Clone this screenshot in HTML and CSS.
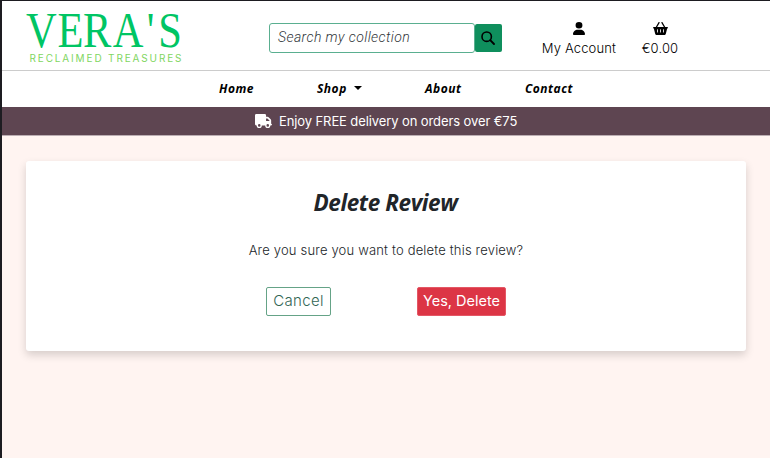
FILE: index.html
```html
<!DOCTYPE html>
<html lang="en">
<head>
<meta charset="utf-8">
<title>Delete Review</title>
<link rel="stylesheet" href="styles.css">
</head>
<body>
<header class="header">
  <a class="logo">
    <svg width="160" height="54" viewBox="0 0 160 54">
      <text class="logo-name" transform="scale(.85 1)" x="0 37 67 102 142 155.500" y="34">VERA'S</text>
      <text class="logo-tag" x="3.500" y="48.500" textLength="152" lengthAdjust="spacing">RECLAIMED TREASURES</text>
    </svg>
  </a>
  <form class="search">
    <div class="search-input"><span>Search my collection</span></div>
    <div class="search-button">
      <svg width="14" height="14" viewBox="0 0 14 14" fill="none" stroke="#000" stroke-width="1.600"><circle cx="5.700" cy="5.700" r="4.700"/><path d="M9.200 9.200L13 13" stroke-width="1.900" stroke-linecap="round"/></svg>
    </div>
  </form>
  <a class="tool account">
    <svg width="12" height="13" viewBox="0 0 448 512" preserveAspectRatio="none"><path d="M224 256a128 128 0 1 0 0-256 128 128 0 1 0 0 256zm-46 48C80 304 0 384 0 482c0 17 13 30 30 30h388c17 0 30-13 30-30 0-98-80-178-178-178z"/></svg>
    <span>My Account</span>
  </a>
  <a class="tool basket">
    <svg width="15" height="13" viewBox="0 0 576 512" preserveAspectRatio="none"><path fill-rule="evenodd" d="M253 35c6-12 2-26-10-32s-26-2-32 10L106 192H32c-18 0-32 14-32 32s14 32 32 32l51 207c7 29 33 49 62 49h286c29 0 55-20 62-49l51-207c18 0 32-14 32-32s-14-32-32-32h-74L365 13c-6-12-20-16-32-10s-16 20-10 32l93 157H160zM192 304v96c0 9-7 16-16 16s-16-7-16-16v-96c0-9 7-16 16-16s16 7 16 16zm112 0v96c0 9-7 16-16 16s-16-7-16-16v-96c0-9 7-16 16-16s16 7 16 16zm112 0v96c0 9-7 16-16 16s-16-7-16-16v-96c0-9 7-16 16-16s16 7 16 16z"/></svg>
    <span>€0.00</span>
  </a>
</header>
<nav class="nav">
  <a class="home">Home</a>
  <a class="shop">Shop<i class="caret"></i></a>
  <a class="about">About</a>
  <a class="contact">Contact</a>
</nav>
<div class="banner">
  <svg width="17" height="14" viewBox="0 0 640 512" preserveAspectRatio="none" fill="#fff"><path fill-rule="evenodd" d="M48 0C21 0 0 21 0 48v320c0 27 21 48 48 48h16a96 96 0 0 0 192 0h128a96 96 0 0 0 192 0h32c18 0 32-14 32-32s-14-32-32-32V237c0-17-7-33-19-45l-77-77c-12-12-28-19-45-19h-51V48c0-27-21-48-48-48zm368 160h51l77 77v19H416zM112 416a48 48 0 1 1 96 0 48 48 0 1 1-96 0zm368-48a48 48 0 1 1 0 96 48 48 0 1 1 0-96z"/></svg>
  <span>Enjoy FREE delivery on orders over €75</span>
</div>
<main class="content">
  <section class="card">
    <h2>Delete Review</h2>
    <p>Are you sure you want to delete this review?</p>
    <div class="actions">
      <a class="btn cancel"><span>Cancel</span></a>
      <a class="btn delete"><span>Yes, Delete</span></a>
    </div>
  </section>
</main>
</body>
</html>
```
FILE: styles.css
```css
* { box-sizing: border-box; }
body {
  margin: 0;
  height: 458px;
  overflow: hidden;
  border-top: 1px solid #1d1c21;
  border-left: 2px solid #1d1c21;
  background: #fff4f1;
  color: #212529;
  font-family: Inter, "Liberation Sans", sans-serif;
  white-space: nowrap;
}
svg { display: block; flex: none; overflow: visible; }
.header {
  display: flex;
  align-items: flex-start;
  height: 70px;
  padding-left: 24px;
  background: #fff;
  border-bottom: 1px solid #ccc;
}
.logo { width: 243px; padding-top: 12px; }
.logo-name { font: 50px "Liberation Serif", serif; fill: #00c564; }
.logo-tag { font: 10px Inter, sans-serif; fill: #7fd65f; }
.search { display: flex; width: 233px; margin-top: 22px; }
.search-input {
  width: 206px;
  height: 30px;
  padding-left: 8px;
  border: 1px solid #5aaf90;
  border-radius: 3px;
  font: italic 300 14px/27px Roboto, sans-serif;
  letter-spacing: 0.42px;
  color: #303539;
}
.search-button {
  display: flex;
  align-items: center;
  justify-content: center;
  width: 27px;
  height: 28px;
  margin-top: 1px;
  border-radius: 2px;
  background: #0f8f5d;
}
.search-button svg { margin-right: 1px; }
.tool {
  display: flex;
  flex-direction: column;
  align-items: center;
  padding-top: 21px;
  color: #000;
  font-size: 13px;
  line-height: 20px;
  font-weight: 300;
  letter-spacing: 0.15px;
}
.tool span { margin-top: 3px; }
.account { width: 76px; margin-left: 39px; }
.basket { width: 38px; margin-left: 24px; }
.nav {
  display: flex;
  height: 36px;
  padding-left: 217px;
  background: #fff;
  color: #000;
  font: italic bold 12px/36px "Open Sans", sans-serif;
  letter-spacing: 0.5px;
}
.home { width: 98px; }
.shop { width: 108px; }
.about { width: 100px; }
.caret {
  display: inline-block;
  margin-left: 7px;
  vertical-align: 3px;
  border: 4px solid transparent;
  border-top-color: #000;
  border-bottom: 0;
}
.banner {
  display: flex;
  align-items: center;
  height: 29px;
  padding-left: 253px;
  gap: 7px;
  background: #5e4551;
  border-bottom: 1px solid #bcaeb3;
  color: #fff;
  font-size: 13px;
  letter-spacing: -0.1px;
}
.content { padding: 25px 24px; }
.card {
  height: 190px;
  padding-top: 24px;
  border-radius: 3px;
  background: #fff;
  box-shadow: 0 4px 9px rgba(0, 0, 0, 0.16);
  text-align: center;
}
h2 {
  margin: 0;
  padding-right: 1px;
  font: italic bold 22.5px/36px "Open Sans", sans-serif;
  letter-spacing: -0.4px;
}
p { margin: 19px 0 0; font-size: 13px; line-height: 20px; font-weight: 300; letter-spacing: 0.18px; }
.actions { display: flex; gap: 86px; padding: 27px 0 0 240px; }
.btn {
  height: 29px;
  border: 1px solid #65a387;
  border-radius: 2px;
  font-size: 14.5px;
  line-height: 26px;
}
.cancel { width: 65px; color: #326655; font-weight: 300; font-size: 15px; letter-spacing: 0.3px; }
.delete { width: 89px; color: #fff; background: #dc3545; border-color: #e45765; }
```
